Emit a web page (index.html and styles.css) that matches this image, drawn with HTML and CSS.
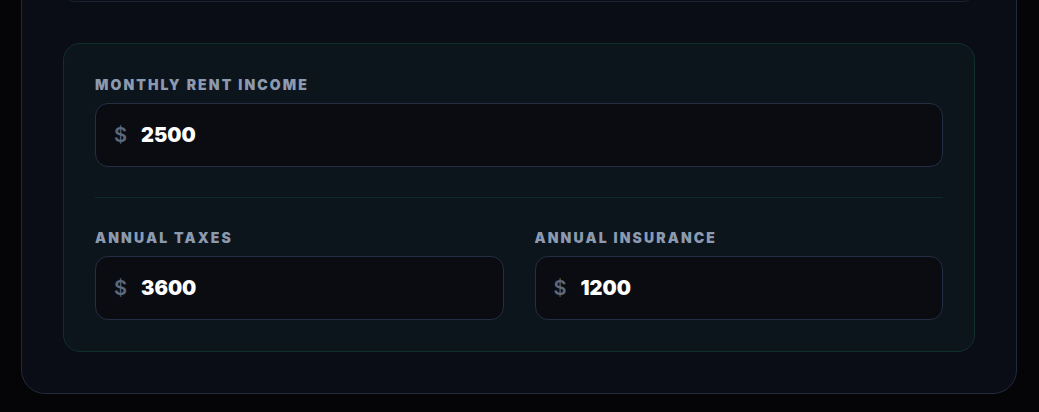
FILE: index.html
```html
<!DOCTYPE html>
<html lang="en">
<head>
    <meta charset="UTF-8">
    <title>Property Expenses</title>
    <meta name="viewport" content="width=device-width, initial-scale=1">
    <link rel="stylesheet" href="styles.css">
</head>
<body>
    <div class="card">
        <div class="prev-panel"></div>

        <div class="panel">
            <div class="field">
                <label class="field-label" for="rent">Monthly Rent Income</label>
                <div class="money-input">
                    <span class="currency">$</span>
                    <input type="text" id="rent" value="2500">
                </div>
            </div>

            <div class="divider"></div>

            <div class="field-row">
                <div class="field">
                    <label class="field-label" for="taxes">Annual Taxes</label>
                    <div class="money-input">
                        <span class="currency">$</span>
                        <input type="text" id="taxes" value="3600">
                    </div>
                </div>
                <div class="field">
                    <label class="field-label" for="insurance">Annual Insurance</label>
                    <div class="money-input">
                        <span class="currency">$</span>
                        <input type="text" id="insurance" value="1200">
                    </div>
                </div>
            </div>
        </div>
    </div>
</body>
</html>
```

FILE: styles.css
```css
body, html {
    margin: 0;
    padding: 0;
    font-family: 'Inter', 'Liberation Sans', sans-serif;
    height: 100%;
}
body {
    background-color: #050508;
    overflow: hidden;
}

.card {
    width: 996px;
    box-sizing: border-box;
    margin: -62px 0 0 21px;
    padding: 40px 41px 41px;
    background-color: #0a0d16;
    border: 1px solid #222a3d;
    border-radius: 24px;
}

.prev-panel {
    height: 21px;
    margin-bottom: 41px;
    border: 1px solid #1c2231;
    border-radius: 16px;
}

.panel {
    padding: 33px 31px 31px;
    background-color: #0c141c;
    border: 1px solid #11302c;
    border-radius: 17px;
}

.field-label {
    display: block;
    margin-bottom: 10px;
    font-size: 14px;
    line-height: 16px;
    font-weight: 900;
    letter-spacing: 2.1px;
    text-transform: uppercase;
    color: #8c9ab0;
}

.money-input {
    display: flex;
    align-items: center;
    gap: 14px;
    height: 62px;
    padding: 0 18px;
    background-color: #0a0c12;
    border: 1px solid #252e42;
    border-radius: 13px;
}

.currency {
    font-size: 20px;
    font-weight: 600;
    color: #5b687d;
}

.money-input input {
    flex: 1;
    min-width: 0;
    padding: 0;
    border: none;
    outline: none;
    background: transparent;
    font-family: inherit;
    font-size: 20px;
    font-weight: 900;
    color: #ffffff;
}

.divider {
    height: 1px;
    margin: 30px 0 32px;
    background-color: #0f2a28;
}

.field-row {
    display: grid;
    grid-template-columns: 1fr 1fr;
    gap: 31px;
}
```
